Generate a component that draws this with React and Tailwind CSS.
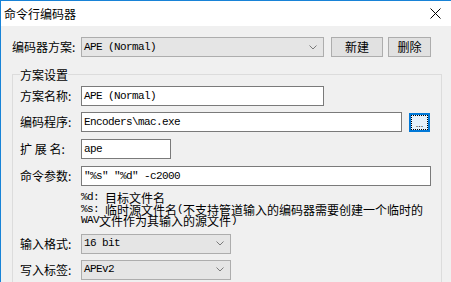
import React from "react";

const cjk = "font-['Noto_Sans_CJK_SC',sans-serif] text-[12px] leading-[14px] text-black";
const cjkTight = "font-['Noto_Sans_CJK_SC',sans-serif] text-[12px] leading-[11.5px] text-black";
const mono = "font-['Liberation_Mono',monospace] text-[11px] tracking-[-0.6px] text-black";
const monoTight = "font-['Liberation_Mono',monospace] text-[11px] leading-[11.5px] tracking-[-0.6px] text-black";

function Chevron() {
  return (
    <svg width="8" height="5" viewBox="0 0 8 5" className="shrink-0">
      <polyline points="0.5,0.5 4,4 7.5,0.5" fill="none" stroke="#7a7a7a" strokeWidth="1" />
    </svg>
  );
}

function Combo({ value, w }) {
  return (
    <div className={`${w} h-[20px] border border-[#adadad] bg-[#e5e5e5] flex items-center pl-[2px] pr-[6px]`}>
      <span className={`${mono} flex-1`}>{value}</span>
      <Chevron />
    </div>
  );
}

function Input({ value, w }) {
  return (
    <div className={`${w} h-[20px] border border-[#7a7a7a] bg-white flex items-center pl-[2px]`}>
      <span className={mono}>{value}</span>
    </div>
  );
}

function Label({ children, w = "w-[61px]" }) {
  return <div className={`${w} shrink-0 ${cjk} whitespace-pre`}>{children}</div>;
}

export default function App() {
  return (
    <div className="w-[451px] h-[282px] bg-[#f0f0f0] border-l border-t border-[#1883d7] overflow-hidden flex flex-col">
      <div className="h-[25px] bg-white flex items-center justify-between pl-[3px] pr-[10px] shrink-0">
        <span className={cjk}>命令行编码器</span>
        <svg width="11" height="11" viewBox="0 0 11 11">
          <path d="M0.5 0.5 L10.5 10.5 M10.5 0.5 L0.5 10.5" stroke="#000" strokeWidth="1" fill="none" />
        </svg>
      </div>
      <div className="pt-[11px] pl-[11px] flex flex-col">
        <div className="flex items-center h-[20px]">
          <Label w="w-[69px]">编码器方案:</Label>
          <Combo value="APE (Normal)" w="w-[243px]" />
          <button className={`ml-[7px] w-[52px] h-[20px] border border-[#adadad] bg-[#e1e1e1] flex items-center justify-center ${cjk}`}>
            新建
          </button>
          <button className={`ml-[5px] w-[43px] h-[20px] border border-[#adadad] bg-[#e1e1e1] flex items-center justify-center ${cjk}`}>
            删除
          </button>
        </div>
        <fieldset className="mt-[9px] w-[430px] border border-[#dcdcdc] pl-[7px] pr-0 pb-[12px] pt-0 m-0">
          <legend className={`${cjk} px-0 leading-[17px]`}>方案设置</legend>
          <div className="flex flex-col mt-[3px]">
            <div className="flex items-center">
              <Label>方案名称:</Label>
              <Input value="APE (Normal)" w="w-[243px]" />
            </div>
            <div className="flex items-center mt-[6px]">
              <Label>编码程序:</Label>
              <Input value="Encoders\mac.exe" w="w-[321px]" />
              <div className="ml-[7px] w-[21px] h-[19px] border-2 border-[#0078d7] bg-[#e5f1fb] flex">
                <div className="flex-1 border border-dotted border-black flex items-end justify-center">
                  <span className="font-['Liberation_Sans',sans-serif] text-[9px] leading-[9px] text-black">...</span>
                </div>
              </div>
            </div>
            <div className="flex items-center mt-[7px]">
              <Label>扩 展 名:</Label>
              <Input value="ape" w="w-[90px]" />
            </div>
            <div className="flex items-center mt-[7px]">
              <Label>命令参数:</Label>
              <Input value={'"%s" "%d" -c2000'} w="w-[350px]" />
            </div>
            <div className="pl-[61px] mt-[6px] flex flex-col">
              <div className="h-[11.5px] flex items-center whitespace-pre">
                <span className={monoTight}>%d: </span>
                <span className={cjkTight}>目标文件名</span>
              </div>
              <div className="h-[11.5px] flex items-center whitespace-pre">
                <span className={monoTight}>%s: </span>
                <span className={cjkTight}>临时源文件名</span>
                <span className={monoTight}>(</span>
                <span className={cjkTight}>不支持管道输入的编码器需要创建一个临时的</span>
              </div>
              <div className="h-[11.5px] flex items-center whitespace-pre">
                <span className={monoTight}>WAV</span>
                <span className={cjkTight}>文件作为其输入的源文件</span>
                <span className={monoTight}>)</span>
              </div>
            </div>
            <div className="flex items-center mt-[7px]">
              <Label>输入格式:</Label>
              <Combo value="16 bit" w="w-[150px]" />
            </div>
            <div className="flex items-center mt-[6px]">
              <Label>写入标签:</Label>
              <Combo value="APEv2" w="w-[150px]" />
            </div>
          </div>
        </fieldset>
      </div>
    </div>
  );
}
